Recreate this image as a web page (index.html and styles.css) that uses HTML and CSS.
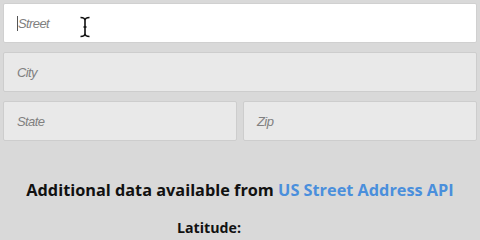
FILE: index.html
```html
<!DOCTYPE html>
<html>
<head>
<meta charset="utf-8">
<link rel="stylesheet" href="styles.css">
</head>
<body>
<div class="page">
  <form class="form">
    <div class="field focused"><span class="caret"></span><span class="ph">Street</span>
      <svg class="ibeam" width="12" height="22" viewBox="0 0 12 22"><path d="M1.5 1.5 Q6 1.5 6 4.5 Q6 1.5 10.5 1.5 M6 4.5 V17.5 M1.5 20.5 Q6 20.5 6 17.5 Q6 20.5 10.5 20.5 M4.5 11 H7.5" fill="none" stroke="#111" stroke-width="1.6"/></svg>
    </div>
    <div class="field"><span class="ph">City</span></div>
    <div class="row">
      <div class="field"><span class="ph">State</span></div>
      <div class="field"><span class="ph">Zip</span></div>
    </div>
  </form>
  <h2 class="title">Additional data available from <span class="link">US Street Address API</span></h2>
  <div class="lat">Latitude:</div>
</div>
</body>
</html>
```
FILE: styles.css
```css
html, body { margin: 0; padding: 0; }
body { background: #d9d9d9; width: 480px; height: 240px; overflow: hidden; }
.page { padding: 3px 3px 0 3px; }
.form { display: flex; flex-direction: column; gap: 9px; margin: 0; }
.row { display: flex; gap: 6px; }
.row .field { flex: 1; }
.field {
  height: 40px; box-sizing: border-box;
  background: #e9e9e9; border: 1px solid #cdcdcd; border-radius: 2px;
  display: flex; align-items: center; padding-left: 13px;
  font-family: "Liberation Sans", Arial, sans-serif; font-style: italic;
  font-size: 13px; letter-spacing: -0.6px; color: #808080; position: relative;
}
.field.focused { background: #ffffff; border-color: #d0d0d0; }
.caret { width: 1px; height: 15px; background: #555; }
.ibeam { position: absolute; left: 75px; top: 12px; }
.title {
  margin: 38px 0 0 0; text-align: center;
  font-family: "Open Sans", sans-serif; font-weight: 700; font-size: 16.3px;
  color: #111;
}
.link { color: #4a8fdc; }
.lat {
  margin-top: 17px; text-align: center; padding-right: 62px;
  font-family: "Open Sans", sans-serif; font-weight: 700; font-size: 14.2px; color: #111;
}
```
